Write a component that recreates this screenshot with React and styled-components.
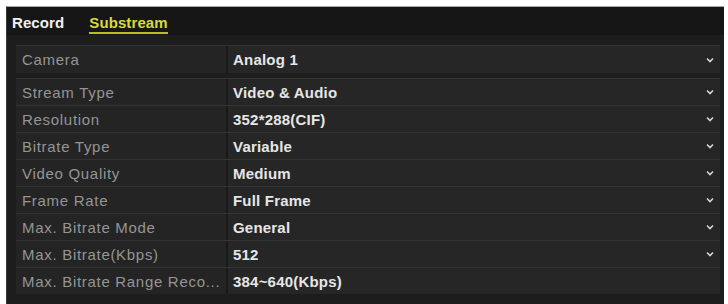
import React from "react";
import styled, { createGlobalStyle } from "styled-components";

const Global = createGlobalStyle`
  html, body { margin: 0; padding: 0; background: #ffffff; }
  body { font-family: "Liberation Sans", Arial, sans-serif; }
`;

const Page = styled.div`
  width: 728px;
  height: 304px;
  box-sizing: border-box;
  padding: 6px 4px 0 6px;
  background: #ffffff;
`;

const Panel = styled.div`
  height: 100%;
  box-sizing: border-box;
  background: #1d1d1d;
  border-top: 1px solid #a8a8a8;
  border-left: 1px solid #3a3a3a;
  display: flex;
  flex-direction: column;
`;

const TabBar = styled.div`
  height: 28px;
  background: #161616;
  display: flex;
  align-items: center;
  padding-left: 5px;
  gap: 25px;
`;

const Tab = styled.div`
  font-size: 15px;
  font-weight: bold;
  letter-spacing: 0.1px;
  color: ${(p) => (p.$active ? "#d6da3c" : "#f0f0f0")};
  padding: 2px 0 1px;
  border-bottom: 2px solid ${(p) => (p.$active ? "#b8bc28" : "transparent")};
  margin-top: 4px;
`;

const Content = styled.div`
  padding: 10px 4px 0 9px;
  display: flex;
  flex-direction: column;
  gap: 5px;
`;

const Group = styled.div`
  display: flex;
  flex-direction: column;
`;

const Row = styled.div`
  display: grid;
  grid-template-columns: 210px 1fr;
  column-gap: 2px;
  height: ${(p) => (p.$tall ? "28px" : "27px")};
  box-sizing: border-box;
  border-top: 1px solid #343434;
  background: #1a1a1a;
`;

const Label = styled.div`
  background: #242424;
  color: #959595;
  font-size: 15px;
  letter-spacing: 0.7px;
  display: flex;
  align-items: center;
  padding-left: 6px;
  white-space: nowrap;
  overflow: hidden;
`;

const Value = styled.div`
  background: #262626;
  color: #e6e6e6;
  font-size: 15px;
  font-weight: bold;
  letter-spacing: 0.2px;
  display: flex;
  align-items: center;
  justify-content: space-between;
  padding: 0 6px 0 5px;
`;

const Arrow = styled.svg`
  width: 8px;
  height: 6px;
  flex: none;
`;

const Chevron = () => (
  <Arrow viewBox="0 0 8 6">
    <path d="M1 1.5 L4 4.5 L7 1.5" fill="none" stroke="#d8d8d8" strokeWidth="1.6" />
  </Arrow>
);

const rows = [
  ["Stream Type", "Video & Audio", true],
  ["Resolution", "352*288(CIF)", true],
  ["Bitrate Type", "Variable", true],
  ["Video Quality", "Medium", true],
  ["Frame Rate", "Full Frame", true],
  ["Max. Bitrate Mode", "General", true],
  ["Max. Bitrate(Kbps)", "512", true],
  ["Max. Bitrate Range Reco...", "384~640(Kbps)", false],
];

export default function App() {
  return (
    <>
      <Global />
      <Page>
        <Panel>
          <TabBar>
            <Tab>Record</Tab>
            <Tab $active>Substream</Tab>
          </TabBar>
          <Content>
            <Group>
              <Row $tall>
                <Label>Camera</Label>
                <Value>
                  Analog 1
                  <Chevron />
                </Value>
              </Row>
            </Group>
            <Group>
              {rows.map(([l, v, a]) => (
                <Row key={l}>
                  <Label>{l}</Label>
                  <Value>
                    {v}
                    {a && <Chevron />}
                  </Value>
                </Row>
              ))}
            </Group>
          </Content>
        </Panel>
      </Page>
    </>
  );
}
